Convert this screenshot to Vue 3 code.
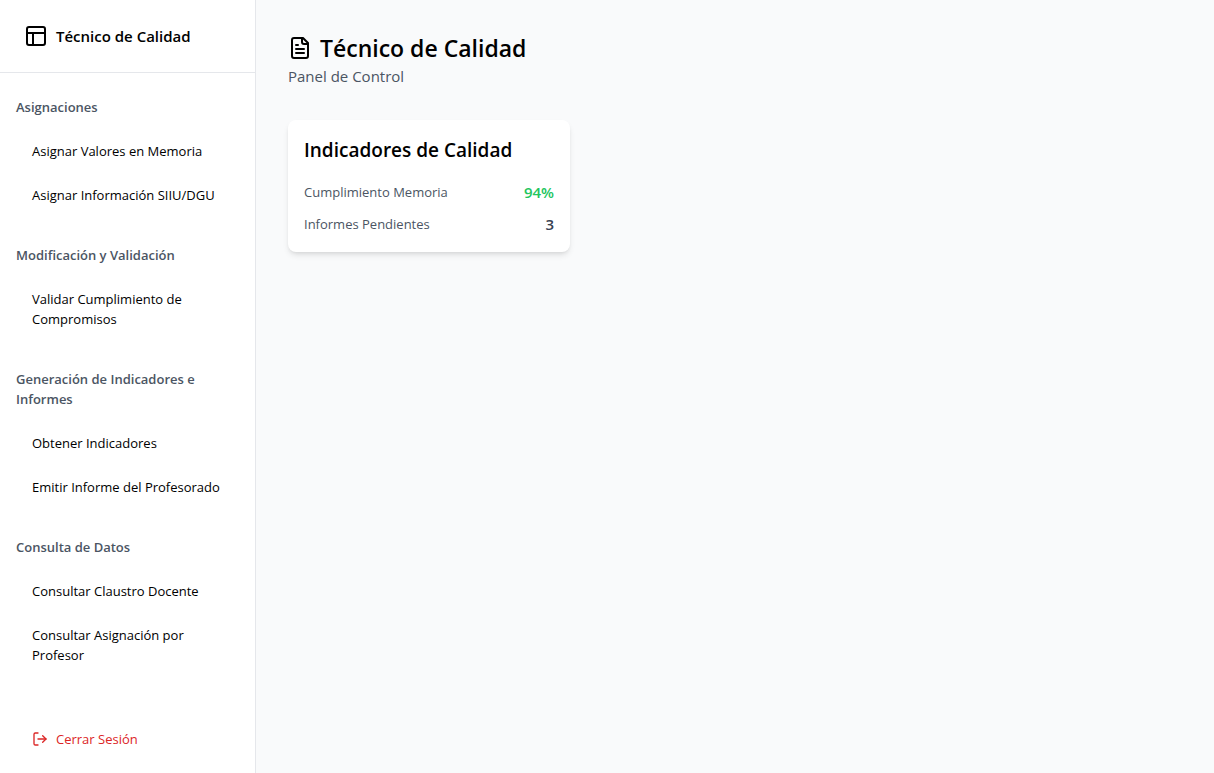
<script setup>
const groups = [
  { title: 'Asignaciones', items: ['Asignar Valores en Memoria', 'Asignar Información SIIU/DGU'] },
  { title: 'Modificación y Validación', items: ['Validar Cumplimiento de Compromisos'] },
  { title: 'Generación de Indicadores e Informes', items: ['Obtener Indicadores', 'Emitir Informe del Profesorado'] },
  { title: 'Consulta de Datos', items: ['Consultar Claustro Docente', 'Consultar Asignación por Profesor'] },
]

const indicators = [
  { label: 'Cumplimiento Memoria', value: '94%', tone: 'good' },
  { label: 'Informes Pendientes', value: '3', tone: 'plain' },
]
</script>

<template>
  <div class="layout">
    <aside class="sidebar">
      <div class="brand">
        <svg class="icon" viewBox="0 0 24 24" aria-hidden="true">
          <rect x="3" y="3" width="18" height="18" rx="2" />
          <path d="M3 9h18" />
          <path d="M9 21V9" />
        </svg>
        <span class="brand-name">Técnico de Calidad</span>
      </div>
      <nav class="nav">
        <section v-for="group in groups" :key="group.title" class="group">
          <h2 class="group-title">{{ group.title }}</h2>
          <button v-for="item in group.items" :key="item" type="button" class="nav-item">{{ item }}</button>
        </section>
      </nav>
      <div class="footer">
        <button type="button" class="nav-item logout">
          <svg class="icon small" viewBox="0 0 24 24" aria-hidden="true">
            <path d="M9 21H5a2 2 0 0 1-2-2V5a2 2 0 0 1 2-2h4" />
            <path d="m16 17 5-5-5-5" />
            <path d="M21 12H9" />
          </svg>
          Cerrar Sesión
        </button>
      </div>
    </aside>

    <main class="main">
      <header class="page-header">
        <h1 class="page-title">
          <svg class="icon" viewBox="0 0 24 24" aria-hidden="true">
            <path d="M15 2H6a2 2 0 0 0-2 2v16a2 2 0 0 0 2 2h12a2 2 0 0 0 2-2V7Z" />
            <path d="M14 2v4a2 2 0 0 0 2 2h4" />
            <path d="M10 9H8" />
            <path d="M16 13H8" />
            <path d="M16 17H8" />
          </svg>
          Técnico de Calidad
        </h1>
        <p class="subtitle">Panel de Control</p>
      </header>
      <div class="cards">
        <section class="card">
          <h2 class="card-title">Indicadores de Calidad</h2>
          <dl class="rows">
            <div v-for="row in indicators" :key="row.label" class="row">
              <dt class="label">{{ row.label }}</dt>
              <dd class="value" :class="row.tone">{{ row.value }}</dd>
            </div>
          </dl>
        </section>
      </div>
    </main>
  </div>
</template>

<style>
body {
  margin: 0;
}
</style>

<style scoped>
.layout {
  display: flex;
  min-height: 100vh;
  background: #f9fafb;
  color: #000;
  font-family: "Segoe UI", "Open Sans", "Noto Sans", sans-serif;
}

.layout * {
  box-sizing: border-box;
}

h1,
h2,
p,
dl,
dd {
  margin: 0;
}

.icon {
  flex: none;
  width: 24px;
  height: 24px;
  fill: none;
  stroke: currentColor;
  stroke-width: 2;
  stroke-linecap: round;
  stroke-linejoin: round;
}

.icon.small {
  width: 16px;
  height: 16px;
}

.sidebar {
  display: flex;
  flex-direction: column;
  flex: none;
  width: 256px;
  background: #fff;
  border-right: 1px solid #e5e7eb;
}

.brand {
  display: flex;
  align-items: center;
  gap: 8px;
  padding: 24px;
  border-bottom: 1px solid #e5e7eb;
}

.brand-name {
  font-size: 15px;
  line-height: 24px;
  font-weight: 600;
}

.nav {
  display: flex;
  flex-direction: column;
  gap: 28px;
  padding: 24px 16px 0;
}

.group-title {
  margin-bottom: 12px;
  font-size: 13px;
  line-height: 20px;
  font-weight: 600;
  color: #4b5563;
}

.nav-item {
  display: block;
  width: 100%;
  padding: 12px 16px;
  border: 0;
  background: none;
  color: inherit;
  font-family: inherit;
  font-size: 13px;
  line-height: 20px;
  text-align: left;
  cursor: pointer;
}

.footer {
  margin-top: auto;
  padding: 0 16px 12px;
}

.logout {
  display: flex;
  align-items: center;
  gap: 8px;
  color: #dc2626;
}

.main {
  flex: 1;
  min-width: 0;
  padding: 32px;
}

.page-header {
  margin-bottom: 32px;
}

.page-title {
  display: flex;
  align-items: center;
  gap: 8px;
  font-size: 23px;
  line-height: 32px;
  font-weight: 600;
}

.subtitle {
  font-size: 15px;
  line-height: 24px;
  color: #4b5563;
}

.cards {
  display: grid;
  grid-template-columns: repeat(3, minmax(0, 1fr));
  gap: 24px;
}

.card {
  padding: 16px;
  border-radius: 8px;
  background: #fff;
  box-shadow: 0 4px 6px -1px rgba(0, 0, 0, 0.1), 0 2px 4px -2px rgba(0, 0, 0, 0.1);
}

.card-title {
  margin-bottom: 16px;
  font-size: 19px;
  line-height: 28px;
  font-weight: 600;
}

.rows {
  display: flex;
  flex-direction: column;
  gap: 8px;
}

.row {
  display: flex;
  align-items: center;
  justify-content: space-between;
}

.label {
  font-size: 13px;
  line-height: 20px;
  color: #4b5563;
}

.value {
  font-size: 15px;
  line-height: 24px;
  font-weight: 600;
}

.good {
  color: #22c55e;
}

.plain {
  color: #374151;
}
</style>
